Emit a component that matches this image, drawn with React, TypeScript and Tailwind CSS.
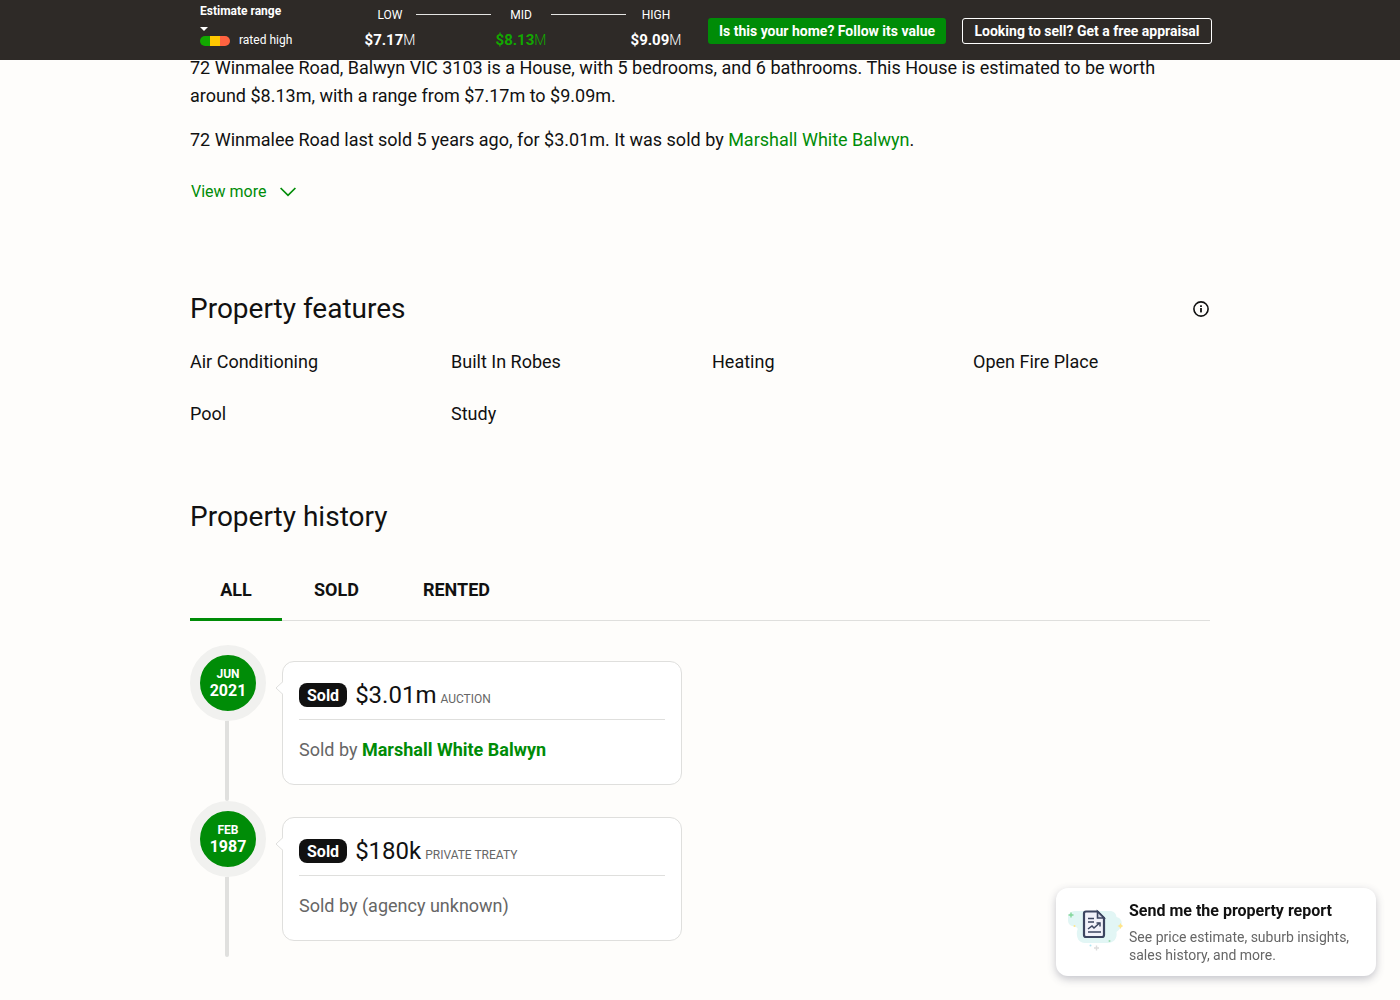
import { useState } from 'react';
import { clsx } from 'clsx';

// ============================================================================
// Data
// ============================================================================

type Tab = 'all' | 'sold' | 'rented';

interface HistoryEvent {
  month: string;
  year: string;
  price: string;
  method: string;
  agency?: string;
}

const TABS: { id: Tab; label: string; width: string }[] = [
  { id: 'all', label: 'ALL', width: 'w-[92px]' },
  { id: 'sold', label: 'SOLD', width: 'w-[109px]' },
  { id: 'rented', label: 'RENTED', width: 'w-[131px]' },
];

const FEATURES = ['Air Conditioning', 'Built In Robes', 'Heating', 'Open Fire Place', 'Pool', 'Study'];

const HISTORY: HistoryEvent[] = [
  { month: 'JUN', year: '2021', price: '$3.01m', method: 'AUCTION', agency: 'Marshall White Balwyn' },
  { month: 'FEB', year: '1987', price: '$180k', method: 'PRIVATE TREATY' },
];

// ============================================================================
// App
// ============================================================================

export default function App() {
  return (
    <div className="min-h-screen bg-[#fefdfb] font-['Roboto',sans-serif] text-[#111]">
      <EstimateBar />
      <main className="mx-auto max-w-[1020px] pt-[54px]">
        <Summary />
        <Features />
        <History />
      </main>
      <ReportPrompt />
    </div>
  );
}

// ============================================================================
// Sticky estimate bar
// ============================================================================

function EstimateBar() {
  return (
    <header className="fixed inset-x-0 top-0 z-10 h-[60px] bg-[#2e2a27] text-white">
      <div className="mx-auto flex h-full max-w-[1024px] pl-3">
        <div className="w-[164px] pt-1">
          <div className="text-xs leading-[14px] font-bold">Estimate range</div>
          <svg width="8" height="4" viewBox="0 0 8 4" className="mt-[9px]" aria-hidden="true">
            <path d="M0 0h8L4 4z" fill="#fff" />
          </svg>
          <div className="flex items-center gap-[9px] text-xs leading-[19px]">
            <div className="flex h-[10px] w-[30px] overflow-hidden rounded-full">
              <span className="flex-1 bg-[#12a800]" />
              <span className="flex-1 bg-[#ffc800]" />
              <span className="flex-1 bg-[#ff6340]" />
            </div>
            rated high
          </div>
        </div>

        <div className="flex pt-1">
          <Estimate label="LOW" value="$7.17" className="w-[52px]" />
          <Connector />
          <Estimate label="MID" value="$8.13" className="w-[60px]" valueClass="text-[#12a800]" />
          <Connector />
          <Estimate label="HIGH" value="$9.09" className="w-[60px]" />
        </div>

        <div className="ml-auto flex items-center gap-4 pt-[2px] text-sm font-bold whitespace-nowrap">
          <button className="h-[26px] w-[238px] rounded-[3px] bg-[#008c07]">
            Is this your home? Follow its value
          </button>
          <button className="h-[26px] w-[250px] rounded-[3px] border border-white">
            Looking to sell? Get a free appraisal
          </button>
        </div>
      </div>
    </header>
  );
}

function Estimate({ label, value, className, valueClass }: {
  label: string;
  value: string;
  className: string;
  valueClass?: string;
}) {
  return (
    <div className={clsx('text-center', className)}>
      <div className="text-xs leading-[22px]">{label}</div>
      <div className={clsx('text-[15px] leading-[28px] font-bold', valueClass)}>
        {value}<span className="text-sm font-light">M</span>
      </div>
    </div>
  );
}

function Connector() {
  return <div className="mt-[10px] h-px w-[75px] bg-[#e4e4e2]" />;
}

// ============================================================================
// Page sections
// ============================================================================

function Summary() {
  return (
    <section>
      <p className="text-lg leading-7">
        72 Winmalee Road, Balwyn VIC 3103 is a House, with 5 bedrooms, and 6 bathrooms. This House is
        estimated to be worth around $8.13m, with a range from $7.17m to $9.09m.
      </p>
      <p className="mt-4 text-lg leading-7">
        72 Winmalee Road last sold 5 years ago, for $3.01m. It was sold by{' '}
        <a href="#agency" className="text-[#008c07]">Marshall White Balwyn</a>.
      </p>
      <button className="mt-[26px] flex items-center gap-[14px] pl-px text-base leading-6 text-[#008c07]">
        View more
        <svg width="16" height="10" viewBox="0 0 16 10" fill="none" aria-hidden="true">
          <path d="M.6 1 8 8.400 15.400 1" stroke="currentColor" strokeWidth="1.7" />
        </svg>
      </button>
    </section>
  );
}

function Features() {
  return (
    <section className="mt-[87px]">
      <div className="flex items-center justify-between">
        <h2 className="text-[28px] leading-9">Property features</h2>
        <button aria-label="About property features" className="mr-px">
          <svg width="16" height="16" viewBox="0 0 16 16" fill="none" aria-hidden="true">
            <circle cx="8" cy="8" r="7.1" stroke="#111" strokeWidth="1.6" />
            <rect x="7.1" y="7" width="1.8" height="4.4" fill="#111" />
            <rect x="7.1" y="4.300" width="1.8" height="1.7" fill="#111" />
          </svg>
        </button>
      </div>
      <ul className="mt-[21px] grid grid-cols-4 gap-6 text-lg leading-7">
        {FEATURES.map((feature) => (
          <li key={feature}>{feature}</li>
        ))}
      </ul>
    </section>
  );
}

function History() {
  const [activeTab, setActiveTab] = useState<Tab>('all');
  const events = activeTab === 'rented' ? [] : HISTORY;

  return (
    <section className="mt-[71px]">
      <h2 className="text-[28px] leading-9">Property history</h2>
      <div role="tablist" className="mt-6 flex h-[62px] border-b border-[#dfdfdd]">
        {TABS.map(({ id, label, width }) => (
          <button
            key={id}
            role="tab"
            aria-selected={activeTab === id}
            onClick={() => setActiveTab(id)}
            className={clsx(
              '-mb-px border-b-[3px] pt-[2px] text-lg font-bold',
              width,
              activeTab === id ? 'border-[#008c07]' : 'border-transparent',
            )}
          >
            {label}
          </button>
        ))}
      </div>
      <ol className="pt-6 pb-11">
        {events.map((event) => (
          <HistoryItem key={event.year} event={event} />
        ))}
      </ol>
    </section>
  );
}

function HistoryItem({ event }: { event: HistoryEvent }) {
  const { month, year, price, method, agency } = event;
  return (
    <li className="flex gap-4">
      <div className="flex w-[76px] flex-col items-center">
        <div className="flex size-[76px] flex-col items-center justify-center rounded-full border-[10px] border-[#f1f1ef] bg-[#008c07] text-white">
          <span className="text-xs leading-4 font-bold">{month}</span>
          <span className="text-base leading-[18px] font-bold">{year}</span>
        </div>
        <div className="-ml-[2px] w-1 flex-1 rounded-b-sm bg-[#e0e0de]" />
      </div>
      <article className="relative my-4 w-[400px] rounded-xl border border-[#dfdfdd] bg-white px-4 pt-[19px] pb-5">
        <svg width="8" height="16" viewBox="0 0 8 16" className="absolute top-[18px] -left-[8px]" aria-hidden="true">
          <path d="M8 1.5 1 8l7 6.5" fill="#fff" stroke="#dfdfdd" />
        </svg>
        <div className="flex h-[39px] items-start border-b border-[#dfdfdd]">
          <span className="mt-[2px] mr-2 h-6 rounded-lg bg-[#111] px-2 text-base leading-[25px] font-bold text-white">
            Sold
          </span>
          <div className="text-2xl leading-7">
            {price} <span className="-ml-[2px] text-xs text-[#666]">{method}</span>
          </div>
        </div>
        <p className="pt-4 text-lg leading-7 text-[#666]">
          Sold by{' '}
          {agency ? (
            <a href="#agency" className="font-bold text-[#008c07]">{agency}</a>
          ) : (
            '(agency unknown)'
          )}
        </p>
      </article>
    </li>
  );
}

// ============================================================================
// Floating report prompt
// ============================================================================

function ReportPrompt() {
  return (
    <button className="fixed right-6 bottom-6 flex h-[88px] w-80 items-center rounded-xl bg-white pb-[2px] pl-[11px] text-left shadow-[0_3px_8px_rgba(60,64,90,0.3)]">
      <ReportIcon />
      <span className="ml-[6px] flex flex-col gap-[5px]">
        <span className="text-base leading-6 font-bold">Send me the property report</span>
        <span className="text-sm leading-[18px] text-[#666]">
          See price estimate, suburb insights,
          <br />
          sales history, and more.
        </span>
      </span>
    </button>
  );
}

function ReportIcon() {
  return (
    <svg width="56" height="44" viewBox="0 0 56 44" fill="none" className="shrink-0" aria-hidden="true">
      <path
        d="M8 2h36q5 1 5.500 6c4 1 6 4 5 8s-3 5-5 7c1 7-3 11-9 11H18c-6 0-9-5-8-12 1-2 1-3-1-4C3 17 1 15 1 11V9c0-4 3-7 7-7Z"
        fill="#e2f6f5"
      />
      <path d="M19 2.500h11.500L37 9v17a2 2 0 0 1-2 2H19a2 2 0 0 1-2-2V4.500a2 2 0 0 1 2-2Z" fill="#f2f2fa" stroke="#3c4560" strokeWidth="2.200" />
      <path d="M30.500 2.500V9H37Z" fill="#d8dbe8" stroke="#3c4560" strokeWidth="1.600" />
      <path d="M21 9.500h6M21 13h6M21 23h13" stroke="#3c4560" strokeWidth="1.300" />
      <path d="m21 20 4-3 2 2 5.500-5" stroke="#3c4560" strokeWidth="1.500" />
      <path d="M29.500 14H33v3.500" stroke="#3c4560" strokeWidth="1.500" />
      <path d="M4 3.500v5M1.500 6h5" stroke="#83d69a" strokeWidth="1.400" />
      <path d="M53.500 14l1 2 2 1-2 1-1 2-1-2-2-1 2-1Z" fill="#ffe58a" />
      <path d="M29.500 36.500v5M27 39h5" stroke="#dcdcdc" strokeWidth="1.400" />
      <circle cx="7.500" cy="17" r="1" fill="#ffe58a" />
      <circle cx="23.500" cy="36.500" r="1" fill="#b4e6f2" />
      <circle cx="42.500" cy="32" r="1" fill="#9fddb0" />
    </svg>
  );
}
